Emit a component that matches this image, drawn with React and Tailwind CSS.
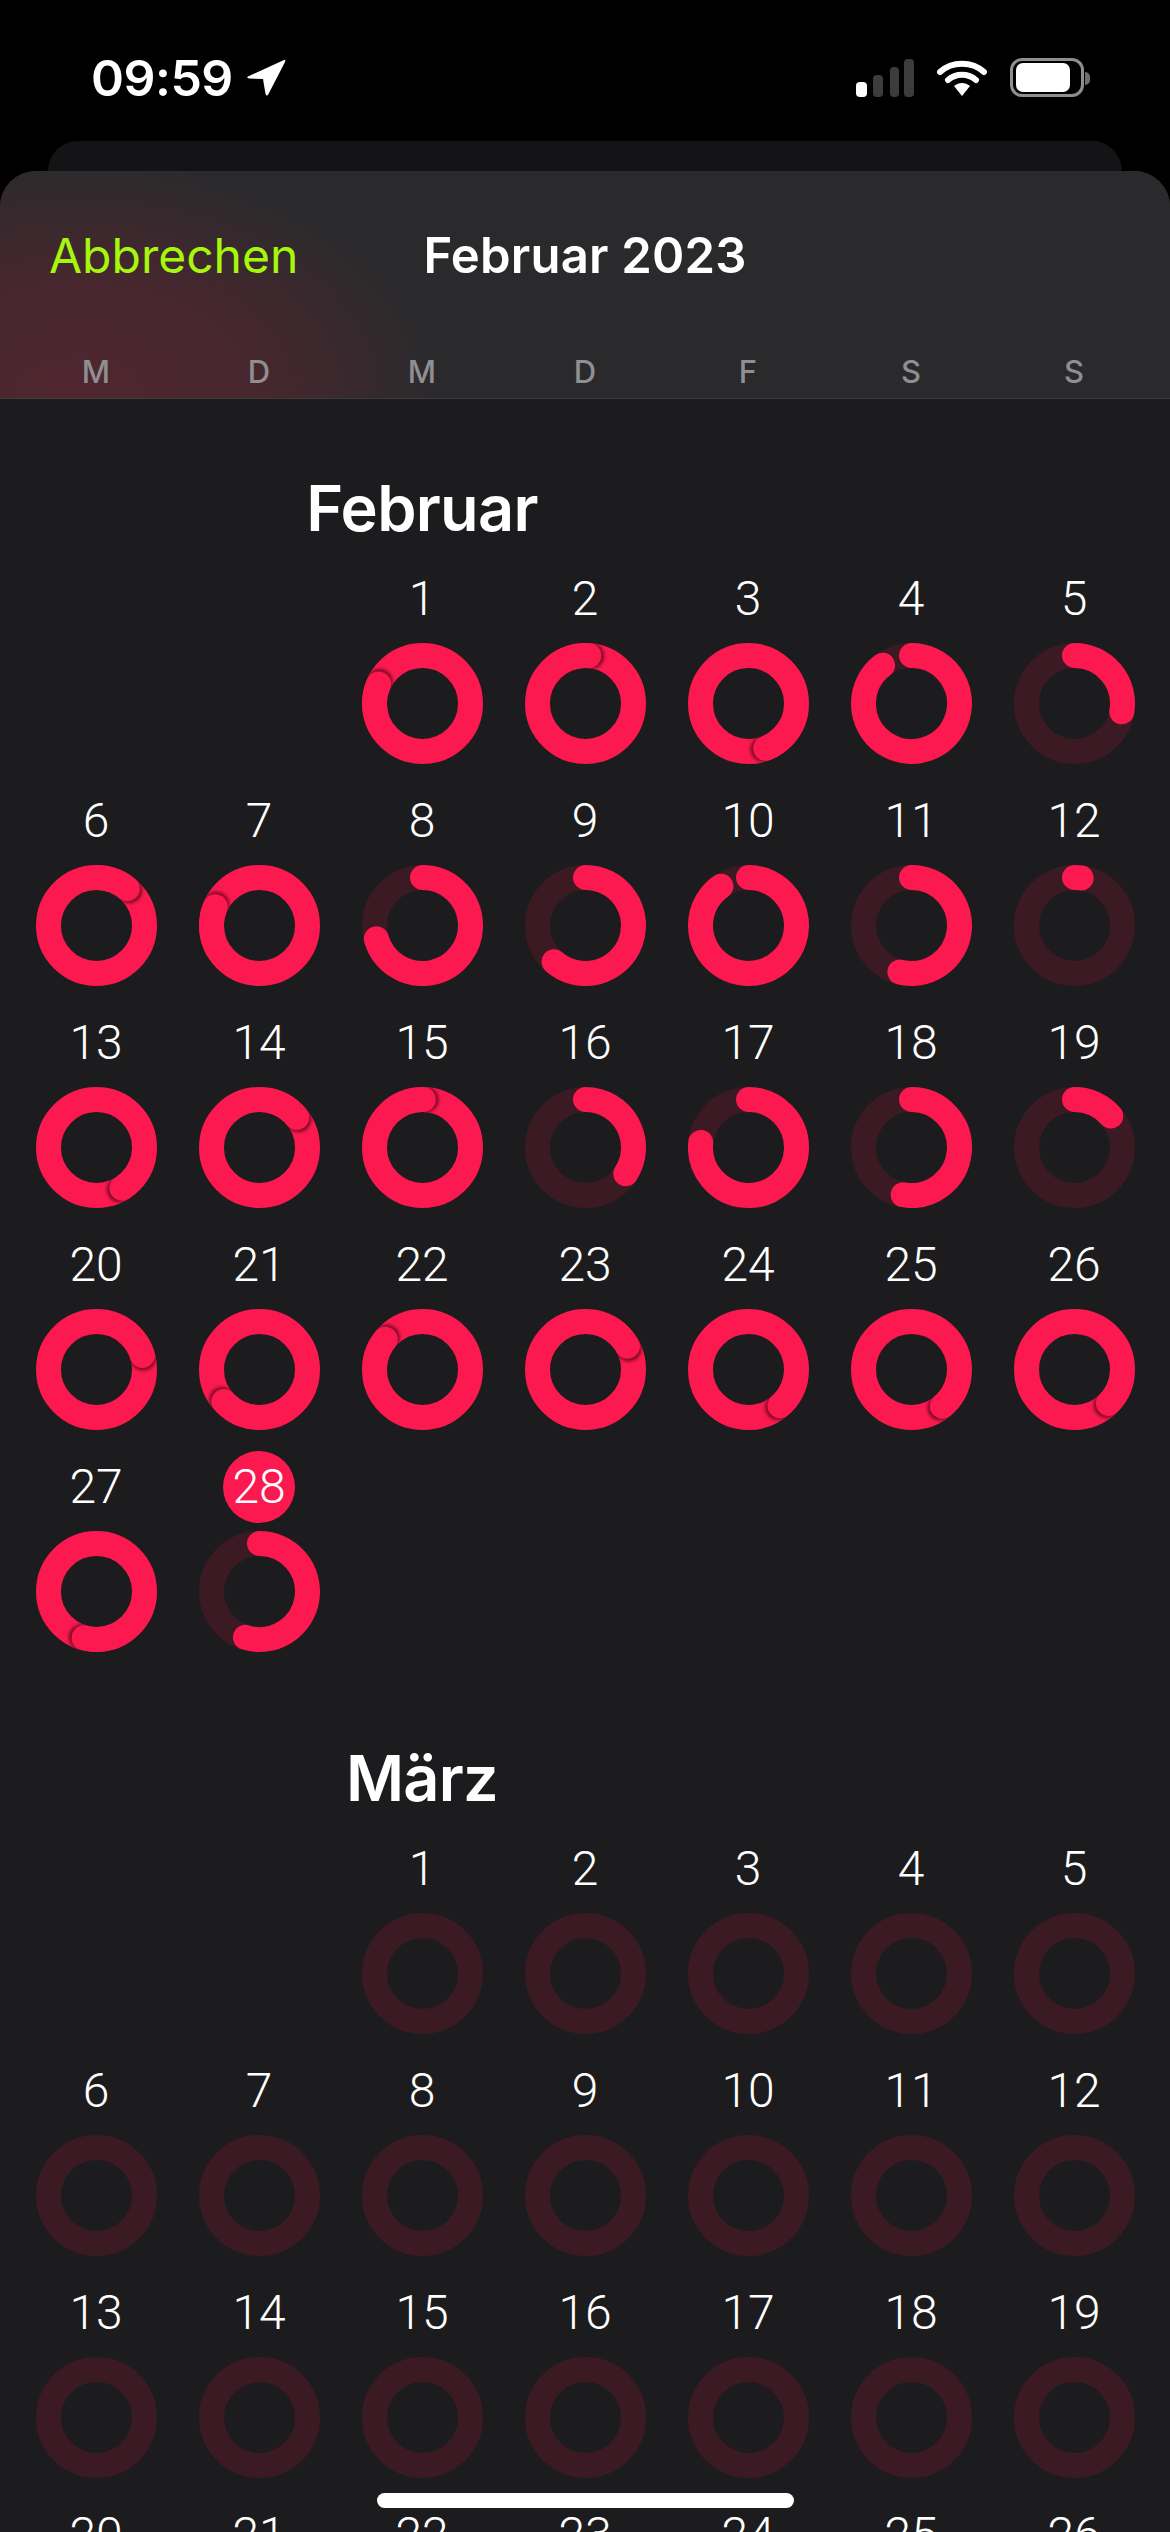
import React from 'react';

const PINK = '#fb1950';
const TRACK = '#3b1a23';
const SIZE = 121;
const STROKE = 25;
const C = SIZE / 2;
const R = C - STROKE / 2;

// end angle in degrees clockwise from 12 o'clock, over = ring went past 100%
const february = [
  { end: 294, over: true }, { end: 4, over: true }, { end: 159, over: true }, { end: 323 }, { end: 100 },
  { end: 40, over: true }, { end: 293, over: true }, { end: 254 }, { end: 221 }, { end: 325 }, { end: 194 }, { end: 8 },
  { end: 148, over: true }, { end: 51, over: true }, { end: 1, over: true }, { end: 123 }, { end: 276 }, { end: 190 }, { end: 49 },
  { end: 73, over: true }, { end: 228, over: true }, { end: 309, over: true }, { end: 61, over: true }, { end: 139, over: true }, { end: 140, over: true }, { end: 135, over: true },
  { end: 195, over: true }, { end: 197 },
];

const point = (deg, radius = R) => {
  const a = (deg * Math.PI) / 180;
  return [C + radius * Math.sin(a), C - radius * Math.cos(a)];
};

const arc = (from, to) => {
  const [x1, y1] = point(from);
  const [x2, y2] = point(to);
  const large = to - from > 180 ? 1 : 0;
  return `M ${x1} ${y1} A ${R} ${R} 0 ${large} 1 ${x2} ${y2}`;
};

const Ring = ({ id, end, over, empty }) => {
  const [cx, cy] = point(end || 0);
  // the shadow sits a little ahead of the cap, clockwise
  const [sx, sy] = point((end || 0) + 3);

  return (
    <svg width={SIZE} height={SIZE} viewBox={`0 0 ${SIZE} ${SIZE}`} className="block shrink-0">
      {over ? (
        <>
          <defs>
            <clipPath id={`clip-${id}`}>
              <path
                clipRule="evenodd"
                d={`M 0 ${C} A ${C} ${C} 0 1 1 ${SIZE} ${C} A ${C} ${C} 0 1 1 0 ${C} Z M ${STROKE} ${C} A ${C - STROKE} ${C - STROKE} 0 1 0 ${SIZE - STROKE} ${C} A ${C - STROKE} ${C - STROKE} 0 1 0 ${STROKE} ${C} Z`}
              />
            </clipPath>
            <filter id={`blur-${id}`} x="-50%" y="-50%" width="200%" height="200%">
              <feGaussianBlur stdDeviation="1.6" />
            </filter>
          </defs>
          <circle cx={C} cy={C} r={R} fill="none" stroke={PINK} strokeWidth={STROKE} />
          <g clipPath={`url(#clip-${id})`}>
            <circle cx={sx} cy={sy} r={STROKE / 2 + 0.5} fill="#3a0010" opacity="0.6" filter={`url(#blur-${id})`} />
            <path d={arc(end - 40, end)} fill="none" stroke={PINK} strokeWidth={STROKE} />
            <circle cx={cx} cy={cy} r={STROKE / 2} fill={PINK} />
          </g>
        </>
      ) : (
        <>
          <circle cx={C} cy={C} r={R} fill="none" stroke={TRACK} strokeWidth={STROKE} />
          {!empty && (
            <path d={arc(0, end)} fill="none" stroke={PINK} strokeWidth={STROKE} strokeLinecap="round" />
          )}
        </>
      )}
    </svg>
  );
};

const DayCell = ({ id, day, offset, today, ring }) => (
  <div className={`flex flex-col items-center gap-[8px] ${offset ? 'col-start-3' : ''}`}>
    <div
      className={`flex h-[72px] w-[72px] items-center justify-center rounded-full font-['Roboto',sans-serif] text-[48px] font-[350] text-white ${today ? 'bg-[#fb1950]' : ''}`}
    >
      {day}
    </div>
    <Ring id={id} {...ring} />
  </div>
);

const Month = ({ name, days, className }) => (
  <section className={className}>
    <div className="grid grid-cols-7">
      <h2 className="col-start-3 flex h-[72px] items-center justify-center whitespace-nowrap text-[63px] font-semibold tracking-[-0.7px] text-white">
        {name}
      </h2>
    </div>
    <div className="mt-[19px] grid grid-cols-7 gap-y-[21px]">
      {days.map((d, i) => (
        <DayCell
          key={i}
          id={`${name}-${i}`}
          day={i + 1}
          offset={i === 0}
          today={d.today}
          ring={d.ring}
        />
      ))}
    </div>
  </section>
);

const StatusBar = () => (
  <div className="flex h-[141px] items-start justify-between pl-[91px] pr-[86px] pt-[58px]">
    <div className="flex items-center gap-[13px]">
      <span className="text-[50px] font-semibold leading-[40px] tracking-[-0.5px] text-white">09:59</span>
      <svg width="40" height="38" viewBox="0 0 40 38">
        <path d="M38 1 L2 17.5 Q0 19 3 19.5 L17 20 L19.5 35 Q21 38 22.5 35 L39 3 Q40 0 38 1 Z" fill="#fff" />
      </svg>
    </div>
    <div className="flex items-center">
      <svg width="58" height="38" viewBox="0 0 58 38">
        <rect x="0" y="23" width="11" height="15" rx="4" fill="#fff" />
        <rect x="17" y="16" width="10" height="22" rx="4" fill="#3c3c3e" />
        <rect x="34" y="8" width="9" height="30" rx="4" fill="#3c3c3e" />
        <rect x="48" y="0" width="10" height="38" rx="4" fill="#3c3c3e" />
      </svg>
      <svg width="50" height="38" viewBox="0 0 50 38" className="ml-[23px]">
        <path d="M3 13 C15 2 35 2 47 13" fill="none" stroke="#fff" strokeWidth="6" strokeLinecap="round" />
        <path d="M11 21 C19 14 31 14 39 21" fill="none" stroke="#fff" strokeWidth="6" strokeLinecap="round" />
        <path d="M17 27 C22 23 28 23 33 27 L25 37 Z" fill="#fff" />
      </svg>
      <div className="relative ml-[23px] flex h-[39px] w-[74px] items-center rounded-[12px] border-[3px] border-[#8e8e93] pl-[3px]">
        <div className="h-[29px] w-[54px] rounded-[7px] bg-white" />
        <div className="absolute right-[-9px] top-[11px] h-[13px] w-[5px] rounded-r-full bg-[#6e6e73]" />
      </div>
    </div>
  </div>
);

const weekdays = ['M', 'D', 'M', 'D', 'F', 'S', 'S'];

export default function App() {
  const febDays = february.map((ring, i) => ({ ring, today: i === 27 }));
  const marDays = Array.from({ length: 31 }, () => ({ ring: { empty: true } }));

  return (
    <div className="relative flex h-[2532px] w-[1170px] flex-col overflow-hidden bg-black font-['Inter',sans-serif]">
      <StatusBar />
      <div className="mx-[48px] h-[30px] shrink-0 rounded-t-[32px] bg-[#141416]" />
      <div className="flex min-h-0 flex-1 flex-col overflow-hidden rounded-t-[36px] bg-[#1c1c1e]">
        <header className="h-[228px] shrink-0 border-b border-[#3c3c3e] bg-[#2a2a2c] bg-[radial-gradient(ellipse_360px_240px_at_80px_228px,#50262f_0%,#47272e_50%,#2a2a2c_100%)] px-[14.5px]">
          <div className="relative flex h-[168px] items-center justify-center pt-[2px]">
            <span className="absolute left-[34.5px] top-[57px] text-[48px] leading-[56px] text-[#a6f60e]">Abbrechen</span>
            <span className="text-[49px] font-semibold leading-[56px] tracking-[0.2px] text-white">Februar 2023</span>
          </div>
          <div className="grid grid-cols-7">
            {weekdays.map((d, i) => (
              <span key={i} className="pt-[13px] text-center text-[31px] font-medium leading-[40px] text-[#8e8e93]">
                {d}
              </span>
            ))}
          </div>
        </header>
        <div className="px-[14.5px] pt-[73px]">
          <Month name="Februar" days={febDays} className="mb-[90px]" />
          <Month name="März" days={marDays} />
        </div>
      </div>
      <div className="absolute bottom-[24px] left-[377px] h-[15px] w-[417px] rounded-full bg-white" />
    </div>
  );
}
